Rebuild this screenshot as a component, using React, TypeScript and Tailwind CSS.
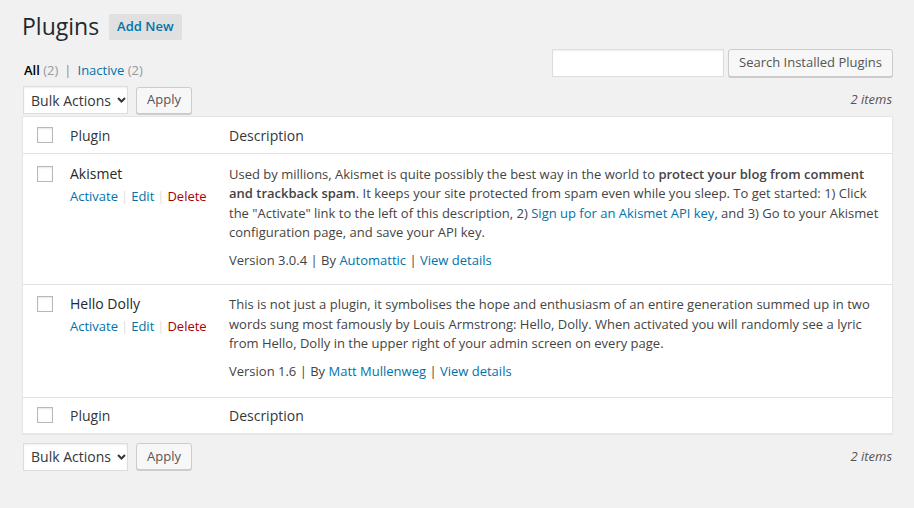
import React from 'react';

const link = 'text-[#0073aa]';

function Checkbox() {
  return <span className="block w-4 h-4 border border-[#b4b9be] bg-white shadow-[inset_0_1px_2px_rgba(0,0,0,0.1)]" />;
}

function Chevron() {
  return (
    <svg width="9" height="6" viewBox="0 0 9 6" className="ml-1.5">
      <path d="M1 1l3.5 3.5L8 1" fill="none" stroke="#32373c" strokeWidth="2" />
    </svg>
  );
}

function Tablenav() {
  return (
    <div className="flex items-center h-[28px]">
      <div className="flex items-center h-[28px] w-[105px] ml-px border border-[#ddd] bg-white pl-[7px] text-[14px] text-[#32373c] shadow-[inset_0_1px_2px_rgba(0,0,0,0.07)]">
        Bulk Actions
        <Chevron />
      </div>
      <button className="ml-[8px] h-[27px] px-[10px] border border-[#ccc] rounded-[3px] bg-[#f7f7f7] text-[13px] text-[#555] shadow-[0_1px_0_#ccc]">
        Apply
      </button>
      <span className="ml-auto mr-px text-[13px] italic text-[#555]">2 items</span>
    </div>
  );
}

function HeadRow({ top }: { top?: boolean }) {
  return (
    <div className={`flex items-center text-[14px] text-[#32373c] ${top ? 'h-[37px] border-b' : 'h-[36px] border-t'} border-[#e1e1e1]`}>
      <div className="w-[47px] pl-[14px]">
        <Checkbox />
      </div>
      <div className="w-[159px]">Plugin</div>
      <div>Description</div>
    </div>
  );
}

function PluginRow({ name, desc, version, author, last }: { name: string; desc: React.ReactNode; version: string; author: string; last?: boolean }) {
  return (
    <div className={`flex ${last ? 'pt-[9px] pb-[15px]' : 'pt-[10px] pb-[14px] border-b border-[#e1e1e1]'}`}>
      <div className="w-[47px] pl-[14px] pt-[2px]">
        <Checkbox />
      </div>
      <div className="w-[159px] shrink-0">
        <div className="text-[14px] text-[#23282d] leading-[20px]">{name}</div>
        <div className="text-[13px] leading-[24px]">
          <span className={link}>Activate</span>
          <span className="text-[#ddd] mx-[3px]">|</span>
          <span className={link}>Edit</span>
          <span className="text-[#ddd] mx-[3px]">|</span>
          <span className="text-[#a00]">Delete</span>
        </div>
      </div>
      <div className="flex-1 pr-[10px] pt-[1px] text-[13px] text-[#444] leading-[19.3px]">
        <p>{desc}</p>
        <div className="mt-[9px]">
          Version {version} <span>|</span> By <span className={link}>{author}</span> <span>|</span>{' '}
          <span className={link}>View details</span>
        </div>
      </div>
    </div>
  );
}

export default function App() {
  return (
    <div className="min-h-screen bg-[#f1f1f1] pl-[22px] pr-[21px] pt-[11px] text-[#444]" style={{ fontFamily: '"Open Sans", sans-serif' }}>
      <div className="flex items-center">
        <h1 className="text-[23px] leading-[31px] text-[#23282d]">Plugins</h1>
        <span className="ml-[10px] mt-[1px] h-[26px] px-[8px] flex items-center rounded-[2px] bg-[#e0e0e0] text-[13px] font-semibold text-[#0073aa]">
          Add New
        </span>
      </div>

      <div className="flex items-start h-[28px] mt-[7px]">
        <div className="pl-[2px] pt-[12px] text-[13px] leading-[18px] text-[#666]">
          <span className="font-semibold text-[#000]">All</span> <span className="text-[#999]">(2)</span>
          <span className="mx-[6px] text-[#a08080]">|</span>
          <span className={link}>Inactive</span> <span className="text-[#999]">(2)</span>
        </div>
        <div className="ml-auto flex items-center">
          <div className="w-[172px] h-[28px] border border-[#ddd] bg-white shadow-[inset_0_1px_2px_rgba(0,0,0,0.07)]" />
          <button className="ml-[4px] h-[28px] w-[165px] border border-[#ccc] rounded-[3px] bg-[#f7f7f7] text-[13px] text-[#555] shadow-[0_1px_0_#ccc]">
            Search Installed Plugins
          </button>
        </div>
      </div>

      <div className="mt-[9px]">
        <Tablenav />
      </div>

      <div className="mt-[2px] bg-white border border-[#e5e5e5] shadow-[0_1px_1px_rgba(0,0,0,0.04)]">
        <HeadRow top />
        <PluginRow
          name="Akismet"
          version="3.0.4"
          author="Automattic"
          desc={
            <>
              Used by millions, Akismet is quite possibly the best way in the world to{' '}
              <strong className="font-semibold">protect your blog from comment and trackback spam</strong>. It keeps your site
              protected from spam even while you sleep. To get started: 1) Click the "Activate" link to the left of this
              description, 2) <span className={link}>Sign up for an Akismet API key</span>, and 3) Go to your Akismet
              configuration page, and save your API key.
            </>
          }
        />
        <PluginRow
          name="Hello Dolly"
          version="1.6"
          author="Matt Mullenweg"
          last
          desc="This is not just a plugin, it symbolises the hope and enthusiasm of an entire generation summed up in two words sung most famously by Louis Armstrong: Hello, Dolly. When activated you will randomly see a lyric from Hello, Dolly in the upper right of your admin screen on every page."
        />
        <HeadRow />
      </div>

      <div className="mt-[9px]">
        <Tablenav />
      </div>
    </div>
  );
}
